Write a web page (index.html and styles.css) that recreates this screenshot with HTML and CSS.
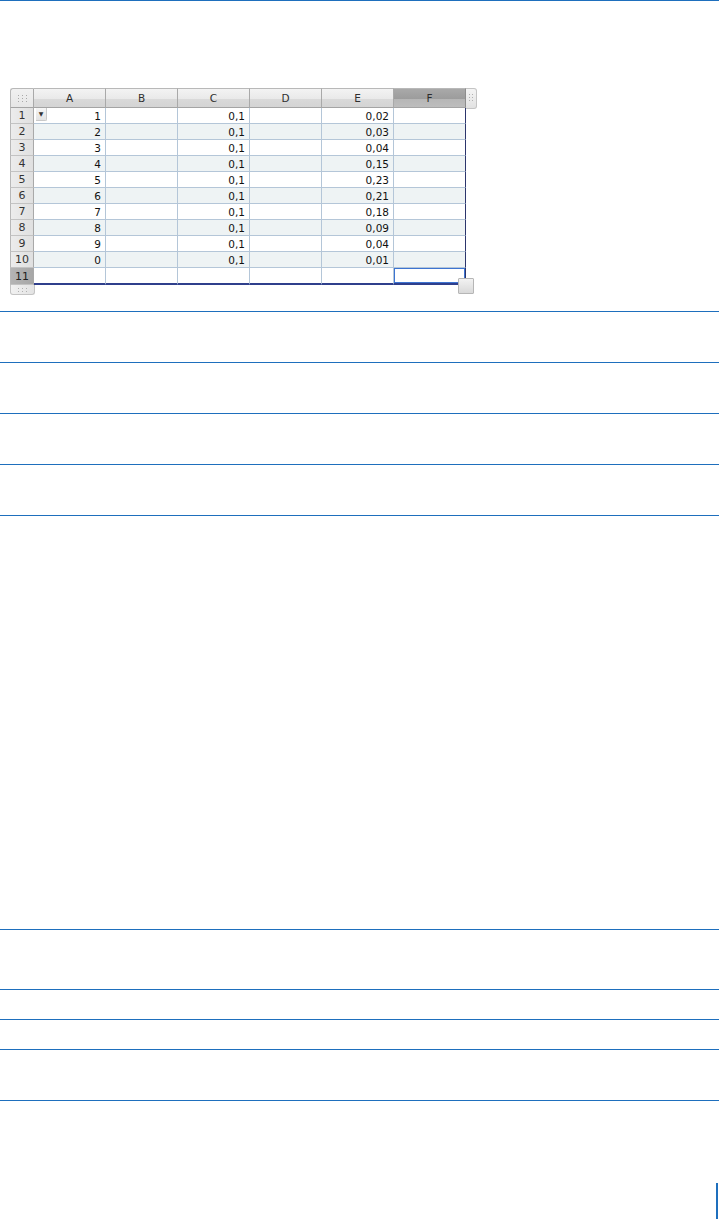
FILE: index.html
```html
<!DOCTYPE html>
<html lang="en">
<head>
    <meta charset="UTF-8">
    <meta name="viewport" content="width=device-width, initial-scale=1.0">
    <title>Table</title>
    <link rel="stylesheet" href="styles.css">
</head>
<body>
    <!-- Figure with the spreadsheet -->
    <div class="lead">
        <div class="sheet-wrap">
            <table class="sheet">
                <colgroup>
                    <col class="col-rh">
                    <col class="col-c"><col class="col-c"><col class="col-c">
                    <col class="col-c"><col class="col-c"><col class="col-c">
                </colgroup>
                <thead>
                    <tr>
                        <th class="corner">
                            <svg width="9" height="7" viewBox="0 0 9 7">
                                <g fill="#a9a9a9">
                                    <rect x="0" y="0" width="1" height="1"/><rect x="4" y="0" width="1" height="1"/><rect x="8" y="0" width="1" height="1"/>
                                    <rect x="0" y="3" width="1" height="1"/><rect x="4" y="3" width="1" height="1"/><rect x="8" y="3" width="1" height="1"/>
                                    <rect x="0" y="6" width="1" height="1"/><rect x="4" y="6" width="1" height="1"/><rect x="8" y="6" width="1" height="1"/>
                                </g>
                            </svg>
                        </th>
                        <th>A</th>
                        <th>B</th>
                        <th>C</th>
                        <th>D</th>
                        <th>E</th>
                        <th class="sel">F</th>
                    </tr>
                </thead>
                <tbody>
                    <tr><th>1</th><td class="first"><span class="drop">&#9660;</span>1</td><td></td><td>0,1</td><td></td><td>0,02</td><td class="last"></td></tr>
                    <tr class="alt"><th>2</th><td>2</td><td></td><td>0,1</td><td></td><td>0,03</td><td class="last"></td></tr>
                    <tr><th>3</th><td>3</td><td></td><td>0,1</td><td></td><td>0,04</td><td class="last"></td></tr>
                    <tr class="alt"><th>4</th><td>4</td><td></td><td>0,1</td><td></td><td>0,15</td><td class="last"></td></tr>
                    <tr><th>5</th><td>5</td><td></td><td>0,1</td><td></td><td>0,23</td><td class="last"></td></tr>
                    <tr class="alt"><th>6</th><td>6</td><td></td><td>0,1</td><td></td><td>0,21</td><td class="last"></td></tr>
                    <tr><th>7</th><td>7</td><td></td><td>0,1</td><td></td><td>0,18</td><td class="last"></td></tr>
                    <tr class="alt"><th>8</th><td>8</td><td></td><td>0,1</td><td></td><td>0,09</td><td class="last"></td></tr>
                    <tr><th>9</th><td>9</td><td></td><td>0,1</td><td></td><td>0,04</td><td class="last"></td></tr>
                    <tr class="alt"><th>10</th><td>0</td><td></td><td>0,1</td><td></td><td>0,01</td><td class="last"></td></tr>
                    <tr class="end"><th class="sel">11</th><td></td><td></td><td></td><td></td><td></td><td class="last active"></td></tr>
                </tbody>
            </table>

            <!-- column grip on the right of the header -->
            <div class="col-grip">
                <svg width="4" height="9" viewBox="0 0 4 9">
                    <g fill="#b0b0b0">
                        <rect x="0" y="0" width="1" height="1"/><rect x="3" y="0" width="1" height="1"/>
                        <rect x="0" y="3" width="1" height="1"/><rect x="3" y="3" width="1" height="1"/>
                        <rect x="0" y="6" width="1" height="1"/><rect x="3" y="6" width="1" height="1"/>
                    </g>
                </svg>
            </div>

            <!-- row grip under the row headers -->
            <div class="row-grip">
                <svg width="9" height="4" viewBox="0 0 9 4">
                    <g fill="#b0b0b0">
                        <rect x="0" y="0" width="1" height="1"/><rect x="4" y="0" width="1" height="1"/><rect x="8" y="0" width="1" height="1"/>
                        <rect x="0" y="3" width="1" height="1"/><rect x="4" y="3" width="1" height="1"/><rect x="8" y="3" width="1" height="1"/>
                    </g>
                </svg>
            </div>

            <!-- resize handle -->
            <div class="resize"></div>
        </div>
    </div>

    <!-- Ruled bands -->
    <div class="band"></div>
    <div class="band"></div>
    <div class="band"></div>
    <div class="band"></div>
    <div class="gap"></div>
    <div class="band tall"></div>
    <div class="band short"></div>
    <div class="band short"></div>
    <div class="band"></div>

    <!-- Page foot with the edge mark -->
    <div class="foot">
        <div class="edge"></div>
    </div>
</body>
</html>
```

FILE: styles.css
```css
/* Basic Styles */
body {
    margin: 0;
    padding: 0;
    background: #fff;
    font-family: "DejaVu Sans", "Liberation Sans", sans-serif;
}

/* Blue rules */
.lead,
.band,
.gap,
.foot {
    border-top: 1px solid #1e6fbd;
}

.lead {
    height: 310px;
}

.band {
    height: 50px;
}

.band.tall {
    height: 59px;
}

.band.short {
    height: 29px;
}

.gap {
    height: 413px;
}

.foot {
    height: 119px;
    display: flex;
    justify-content: flex-end;
    align-items: flex-start;
    padding-top: 82px;
    box-sizing: border-box;
}

.edge {
    width: 2px;
    height: 37px;
    margin-right: 1px;
    background: #1e6fbd;
}

/* Spreadsheet */
.sheet-wrap {
    position: relative;
    margin: 87px 0 0 10px;
    width: 467px;
}

.sheet {
    table-layout: fixed;
    width: 456px;
    border-collapse: separate;
    border-spacing: 0;
    font-size: 10.5px;
    color: #111;
}

.col-rh {
    width: 24px;
}

.col-c {
    width: 72px;
}

.sheet th,
.sheet td {
    box-sizing: border-box;
    padding: 0;
    border-right: 1px solid #b4c6d8;
    border-bottom: 1px solid #b4c6d8;
    white-space: nowrap;
    overflow: hidden;
}

/* Column headers */
.sheet thead th {
    height: 20px;
    font-weight: normal;
    font-size: 10.5px;
    color: #2e2e2e;
    text-align: center;
    vertical-align: middle;
    border-top: 1px solid #b8b8b8;
    border-right: 1px solid #a9a9a9;
    border-bottom: 1px solid #a4a4a4;
    background: linear-gradient(to bottom, #f3f3f3 0%, #e9e9e9 55%, #d9d9d9 56%, #d4d4d4 100%);
}

.sheet thead th.corner {
    border-left: 1px solid #b8b8b8;
    border-top-left-radius: 3px;
    background: linear-gradient(to bottom, #f1f1f1 0%, #e6e6e6 100%);
    line-height: 0;
}

.sheet thead th.sel {
    color: #2c2c2c;
    border-right-color: #8d8d8d;
    background: linear-gradient(to bottom, #a9a9a9 0%, #9c9c9c 55%, #b6b6b6 56%, #bdbdbd 100%);
}

/* Row headers */
.sheet tbody th {
    height: 16px;
    font-weight: normal;
    color: #333;
    text-align: center;
    font-size: 11px;
    border-left: 1px solid #b8b8b8;
    border-right: 1px solid #a9a9a9;
    border-bottom: 1px solid #c3c3c3;
    background: linear-gradient(to right, #ececec 0%, #e0e0e0 100%);
}

.sheet tbody th.sel {
    background: linear-gradient(to right, #b4b4b4 0%, #a7a7a7 100%);
    color: #222;
}

/* Body cells */
.sheet td {
    position: relative;
    height: 16px;
    text-align: right;
    padding-right: 4px;
    background: #fff;
    line-height: 14px;
}

.sheet tr.alt td {
    background: #eef3f4;
}

.sheet td.last {
    border-right: 1px solid #2c356c;
}

.sheet tr.end td {
    border-bottom: 2px solid #2f3f8c;
    height: 17px;
}

.sheet td.active {
    box-shadow: inset 0 0 0 1px #3d74d1;
    border-bottom-color: #3d74d1;
}

/* Dropdown button in A1 */
.drop {
    position: absolute;
    left: 2px;
    top: 0;
    width: 10px;
    height: 12px;
    border-right: 1px solid #c9c9c9;
    border-bottom: 1px solid #c9c9c9;
    border-bottom-right-radius: 2px;
    background: linear-gradient(to bottom, #f6f6f6, #e3e3e3);
    font-size: 6px;
    line-height: 12px;
    text-align: center;
    color: #333;
}

/* Grips */
.col-grip {
    position: absolute;
    left: 456px;
    top: 0;
    width: 10px;
    height: 19px;
    border: 1px solid #c4c4c4;
    border-left: none;
    border-radius: 0 3px 3px 0;
    background: linear-gradient(to bottom, #f4f4f4, #e2e2e2);
    display: flex;
    justify-content: center;
    align-items: center;
}

.row-grip {
    width: 23px;
    height: 9px;
    border: 1px solid #c4c4c4;
    border-top: none;
    border-radius: 0 0 3px 3px;
    background: linear-gradient(to right, #f1f1f1, #e3e3e3);
    display: flex;
    justify-content: center;
    align-items: center;
}

.resize {
    position: absolute;
    left: 448px;
    top: 190px;
    width: 14px;
    height: 14px;
    border: 1px solid #b6b6b6;
    border-radius: 1px;
    background: linear-gradient(to bottom, #f2f2f2, #d9d9d9);
}
```
